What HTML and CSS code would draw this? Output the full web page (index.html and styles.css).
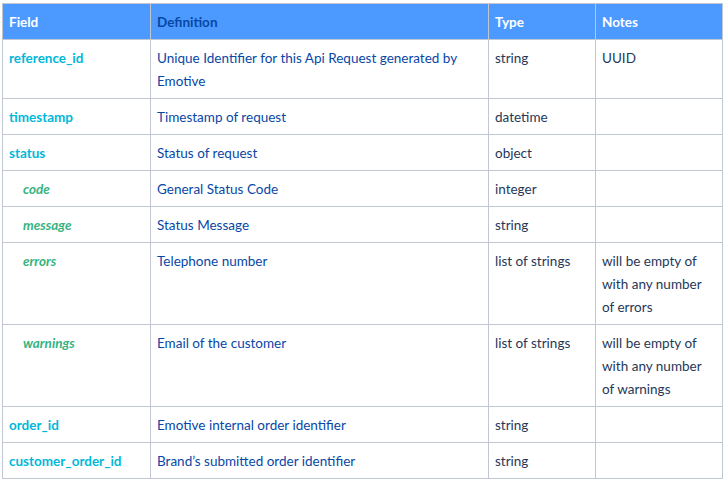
FILE: index.html
```html
<!DOCTYPE html>
<html>
<head>
<meta charset="utf-8">
<link rel="stylesheet" href="styles.css">
</head>
<body>
<table class="spec">
  <colgroup>
    <col class="c-field"><col class="c-def"><col class="c-type"><col class="c-notes">
  </colgroup>
  <thead>
    <tr>
      <th class="h-light">Field</th>
      <th class="h-dark">Definition</th>
      <th class="h-light">Type</th>
      <th class="h-light">Notes</th>
    </tr>
  </thead>
  <tbody>
    <tr><td class="f">reference_id</td><td class="d">Unique Identifier for this Api Request generated by Emotive</td><td class="t">string</td><td class="t">UUID</td></tr>
    <tr><td class="f">timestamp</td><td class="d">Timestamp of request</td><td class="t">datetime</td><td class="t"></td></tr>
    <tr><td class="f">status</td><td class="d">Status of request</td><td class="t">object</td><td class="t"></td></tr>
    <tr><td class="f sub">code</td><td class="d">General Status Code</td><td class="t">integer</td><td class="t"></td></tr>
    <tr><td class="f sub">message</td><td class="d">Status Message</td><td class="t">string</td><td class="t"></td></tr>
    <tr><td class="f sub">errors</td><td class="d">Telephone number</td><td class="t">list of strings</td><td class="t">will be empty of with any number of errors</td></tr>
    <tr><td class="f sub">warnings</td><td class="d">Email of the customer</td><td class="t">list of strings</td><td class="t">will be empty of with any number of warnings</td></tr>
    <tr><td class="f">order_id</td><td class="d">Emotive internal order identifier</td><td class="t">string</td><td class="t"></td></tr>
    <tr><td class="f">customer_order_id</td><td class="d">Brand’s submitted order identifier</td><td class="t">string</td><td class="t"></td></tr>
  </tbody>
</table>
</body>
</html>
```
FILE: styles.css
```css
html, body {
  margin: 0;
  background: #ffffff;
}
body {
  padding: 3px 0 0 2px;
  font-family: Lato, "Open Sans", sans-serif;
  font-size: 13.5px;
  line-height: 23px;
}
.spec {
  border-collapse: collapse;
  table-layout: fixed;
  width: 720px;
}
.c-field { width: 148px; }
.c-def { width: 338px; }
.c-type { width: 107px; }
.c-notes { width: 127px; }
.spec th, .spec td {
  border: 1px solid #c1c7d0;
  padding: 7px 6px 5px 6px;
  text-align: left;
  vertical-align: top;
}
.spec th {
  background: #4c9aff;
  font-weight: 700;
}
.h-light { color: #ffffff; }
.h-dark { color: #0747a6; }
.f {
  color: #00b8d9;
  font-weight: 700;
}
.f.sub {
  color: #36b37e;
  font-style: italic;
  padding-left: 20px;
}
.d { color: #0747a6; }
.t { color: #253858; }
```
